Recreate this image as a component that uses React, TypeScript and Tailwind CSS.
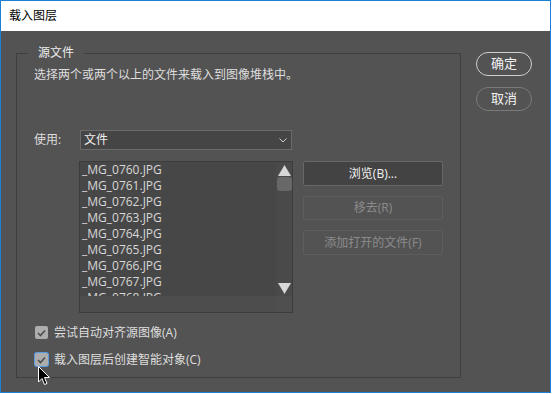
import React from 'react';

const files = [
  '_MG_0760.JPG',
  '_MG_0761.JPG',
  '_MG_0762.JPG',
  '_MG_0763.JPG',
  '_MG_0764.JPG',
  '_MG_0765.JPG',
  '_MG_0766.JPG',
  '_MG_0767.JPG',
  '_MG_0768.JPG',
];

const Check: React.FC<{ focused?: boolean }> = ({ focused }) => (
  <span
    className={`w-[13px] h-[13px] rounded-[2px] bg-[#adadad] flex items-center justify-center ${focused ? 'ring-1 ring-[#5b9be0]' : ''}`}
  >
    <svg width="9" height="8" viewBox="0 0 9 8">
      <polyline points="1,4 3.5,6.5 8,1.5" fill="none" stroke="#4e4e4e" strokeWidth="1.6" />
    </svg>
  </span>
);

const App: React.FC = () => {
  return (
    <div
      className="w-[552px] h-[394px] bg-white relative"
      style={{ fontFamily: '"Open Sans", "Noto Sans CJK SC", sans-serif' }}
    >
      <div className="w-[551px] h-[393px] border border-[#1b7fd4] flex flex-col">
        <div className="h-[30px] pl-2 flex items-center text-[12px] text-black bg-white">载入图层</div>

        <div className="flex-1 bg-[#535353] flex pl-[15px] text-[12px] text-[#dedede]">
          <fieldset className="mt-[14px] w-[445px] self-start border border-[#3f3f3f] pb-[11px]">
            <legend className="ml-[11px] px-[10px] leading-[16px] text-[#ececec]">源文件</legend>

            <div className="pl-[17px] flex flex-col">
              <p className="mt-[6px] leading-[16px]">选择两个或两个以上的文件来载入到图像堆栈中。</p>

              <div className="mt-[47px] flex items-center h-[20px]">
                <span className="w-[46px] leading-[16px]">使用:</span>
                <div className="w-[212px] h-[20px] bg-[#454545] border border-[#6b6b6b] flex items-center justify-between pl-[3px] pr-[4px] text-[#f0f0f0]">
                  <span className="leading-[16px]">文件</span>
                  <svg width="8" height="5" viewBox="0 0 8 5">
                    <polyline points="0.5,0.5 4,4 7.5,0.5" fill="none" stroke="#cfcfcf" strokeWidth="1" />
                  </svg>
                </div>
              </div>

              <div className="mt-[11px] flex">
                <div className="ml-[45px] w-[214px] h-[152px] border border-[#3c3c3c] flex flex-col bg-[#474747]">
                  <div className="flex h-[134px]">
                    <div className="flex-1 overflow-hidden pl-[2px] text-[#d8d8d8]">
                      {files.map(f => (
                        <div key={f} className="h-[16px] leading-[16px]">{f}</div>
                      ))}
                    </div>
                    <div className="w-[16px] bg-[#4a4a4a] flex flex-col items-center justify-between pt-[3px] pb-[2px]">
                      <div className="flex flex-col items-center">
                        <svg width="13" height="11" viewBox="0 0 13 11">
                          <polygon points="6.5,0 13,11 0,11" fill="#d7d7d7" />
                        </svg>
                        <div className="mt-[1px] w-[15px] h-[14px] rounded-[3px] bg-[#686868]" />
                      </div>
                      <svg width="13" height="11" viewBox="0 0 13 11">
                        <polygon points="0,0 13,0 6.5,11" fill="#d7d7d7" />
                      </svg>
                    </div>
                  </div>
                  <div className="flex flex-1">
                    <div className="flex-1 bg-[#4d4d4d]" />
                    <div className="w-[16px] bg-[#4f4f4f]" />
                  </div>
                </div>

                <div className="ml-[10px] w-[140px] flex flex-col gap-[10px]">
                  <div className="h-[25px] bg-[#434343] border border-[#676767] rounded-[2px] flex items-center justify-center text-[#f4f4f4]">
                    浏览(B)...
                  </div>
                  <div className="h-[24px] border border-[#5e5e5e] rounded-[2px] flex items-center justify-center text-[#8b8b8b]">
                    移去(R)
                  </div>
                  <div className="h-[25px] border border-[#5e5e5e] rounded-[2px] flex items-center justify-center text-[#8b8b8b]">
                    添加打开的文件(F)
                  </div>
                </div>
              </div>

              <label className="mt-[13px] ml-[1px] flex items-center h-[13px] gap-[6px]">
                <Check />
                <span className="leading-[16px]">尝试自动对齐源图像(A)</span>
              </label>
              <label className="mt-[14px] ml-[1px] flex items-center h-[13px] gap-[6px]">
                <Check focused />
                <span className="leading-[16px]">载入图层后创建智能对象(C)</span>
              </label>
            </div>
          </fieldset>

          <div className="ml-[15px] mt-[21px] flex flex-col gap-[11px]">
            <div className="w-[56px] h-[24px] rounded-full border-[1.5px] border-[#cfcfcf] flex items-center justify-center text-[13px] text-[#f2f2f2]">
              确定
            </div>
            <div className="w-[56px] h-[24px] rounded-full border-[1.5px] border-[#7a7a7a] flex items-center justify-center text-[13px] text-[#f2f2f2]">
              取消
            </div>
          </div>
        </div>
      </div>

      <svg className="absolute left-[38px] top-[366px]" width="13" height="20" viewBox="0 0 13 20">
        <polygon
          points="0.5,0.5 0.5,16 4,12.5 6.5,18.5 9,17.5 6.5,11.5 11.5,11.5"
          fill="#000"
          stroke="#fff"
          strokeWidth="1"
          strokeLinejoin="round"
        />
      </svg>
    </div>
  );
};

export default App;
